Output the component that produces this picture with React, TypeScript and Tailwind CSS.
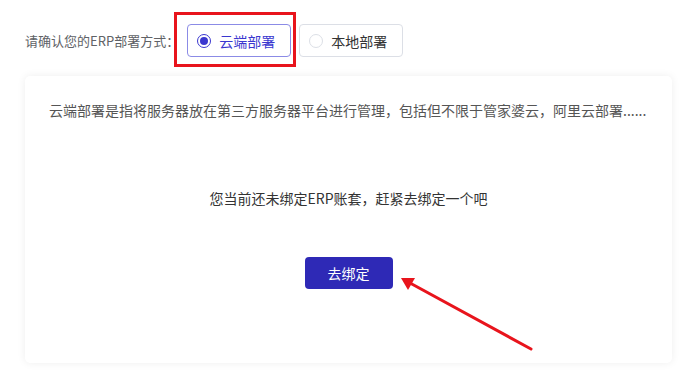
import { useState } from 'react';

const font = { fontFamily: '"Noto Sans CJK SC", "Microsoft YaHei", sans-serif' };

type Mode = 'cloud' | 'local';

function RadioButton({ label, checked, onClick }: { label: string; checked: boolean; onClick: () => void }) {
  return (
    <button
      onClick={onClick}
      className={`flex items-center h-[33px] w-[104px] pl-[9px] rounded-[4px] border bg-white ${
        checked ? 'border-[#8b8be6] text-[#3a37cf]' : 'border-[#dcdfe6] text-[#333333]'
      }`}
    >
      <span
        className={`flex items-center justify-center size-[14px] rounded-full border ${
          checked ? 'border-[#3a37cf]' : 'border-[#dcdfe6]'
        }`}
      >
        {checked && <span className="size-[8px] rounded-full bg-[#3a37cf]" />}
      </span>
      <span className="ml-[8px] text-[14px] leading-none">{label}</span>
    </button>
  );
}

export default function App() {
  const [mode, setMode] = useState<Mode>('cloud');

  return (
    <div className="relative w-[697px] h-[388px] bg-white" style={font}>
      <div className="flex items-center pt-[24px] pl-[25px]">
        <span className="text-[13px] text-[#606266] mr-[8px]">请确认您的ERP部署方式：</span>
        <div className="relative">
          <RadioButton label="云端部署" checked={mode === 'cloud'} onClick={() => setMode('cloud')} />
          {/* annotation box */}
          <div className="absolute -left-[13px] -right-[5px] -top-[12px] -bottom-[10px] border-[3px] border-[#e8141c] pointer-events-none" />
        </div>
        <div className="ml-[8px]">
          <RadioButton label="本地部署" checked={mode === 'local'} onClick={() => setMode('local')} />
        </div>
      </div>

      <div className="mx-[25px] mt-[19px] h-[287px] rounded-[5px] bg-white shadow-[0_0_8px_rgba(0,0,0,0.07)] pt-[23px] px-[24px] flex flex-col items-center">
        <p className="self-start text-[14px] leading-[22px] text-[#555555]">
          云端部署是指将服务器放在第三方服务器平台进行管理，包括但不限于管家婆云，阿里云部署......
        </p>
        <p className="mt-[66px] text-[14px] leading-[22px] text-[#333333]">
          您当前还未绑定ERP账套，赶紧去绑定一个吧
        </p>
        <button className="mt-[48px] w-[88px] h-[32px] rounded-[4px] bg-[#2e29b6] text-white text-[14px]">
          去绑定
        </button>
      </div>

      <svg className="absolute inset-0 pointer-events-none" width="697" height="388">
        <line x1="531" y1="349" x2="410" y2="283" stroke="#e8141c" strokeWidth="3" strokeLinecap="round" />
        <polygon points="401,278 415,278 408,290" fill="#e8141c" />
      </svg>
    </div>
  );
}
